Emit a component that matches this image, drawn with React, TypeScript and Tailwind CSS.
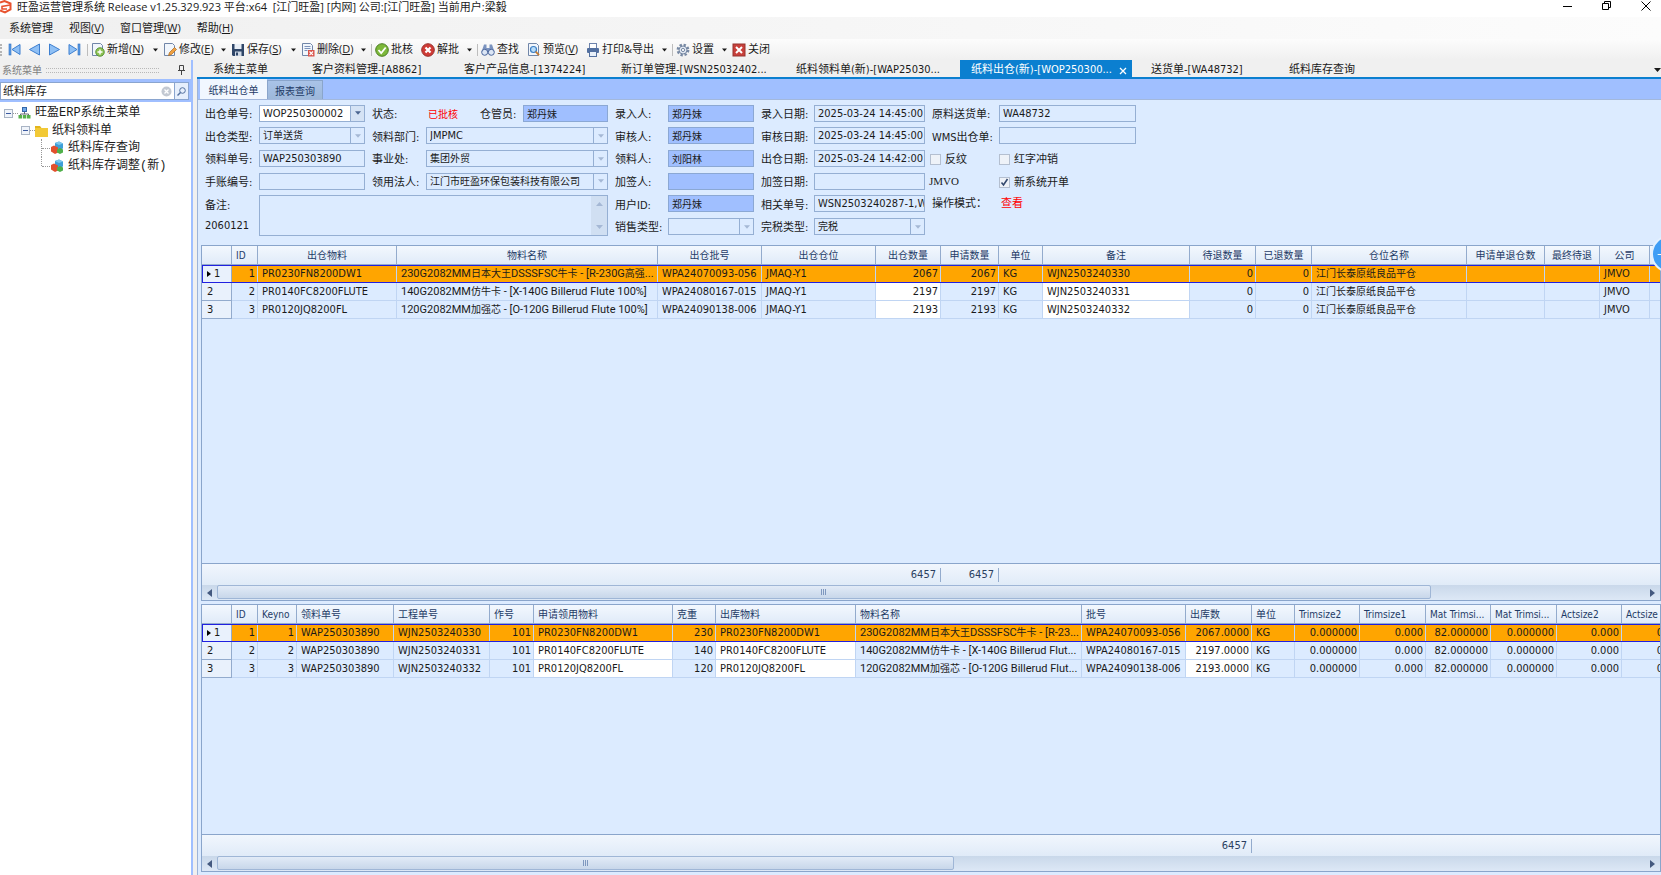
import React from "react";

type Align = "left" | "right" | "center";

interface IColumn {
  title: string;
  width: number;
  align?: Align;
  editable?: boolean;
  long?: boolean;
  total?: string;
}

const stockColumns: IColumn[] = [
  { title: "ID", width: 26, align: "right" },
  { title: "出仓物料", width: 139 },
  { title: "物料名称", width: 261, long: true },
  { title: "出仓批号", width: 104 },
  { title: "出仓仓位", width: 114 },
  { title: "出仓数量", width: 65, align: "right", editable: true, total: "6457" },
  { title: "申请数量", width: 58, align: "right", total: "6457" },
  { title: "单位", width: 44 },
  { title: "备注", width: 147, editable: true },
  { title: "待退数量", width: 66, align: "right" },
  { title: "已退数量", width: 56, align: "right" },
  { title: "仓位名称", width: 155 },
  { title: "申请单退仓数", width: 78 },
  { title: "最终待退", width: 55 },
  { title: "公司", width: 50 },
  { title: "", width: 60 },
];

const stockRows = [
  ["1", "PR0230FN8200DW1", "230G2082MM日本大王DSSSFSC牛卡 - [R-230G高强...", "WPA24070093-056", "JMAQ-Y1", "2067", "2067", "KG", "WJN2503240330", "0", "0", "江门长泰原纸良品平仓", "", "", "JMVO", ""],
  ["2", "PR0140FC8200FLUTE", "140G2082MM仿牛卡 - [X-140G Billerud Flute 100%]", "WPA24080167-015", "JMAQ-Y1", "2197", "2197", "KG", "WJN2503240331", "0", "0", "江门长泰原纸良品平仓", "", "", "JMVO", ""],
  ["3", "PR0120JQ8200FL", "120G2082MM加强芯 - [O-120G Billerud Flute 100%]", "WPA24090138-006", "JMAQ-Y1", "2193", "2193", "KG", "WJN2503240332", "0", "0", "江门长泰原纸良品平仓", "", "", "JMVO", ""],
];

const detailColumns: IColumn[] = [
  { title: "ID", width: 26, align: "right" },
  { title: "Keyno", width: 39, align: "right" },
  { title: "领料单号", width: 97 },
  { title: "工程单号", width: 96 },
  { title: "作号", width: 44, align: "right" },
  { title: "申请领用物料", width: 139, editable: true },
  { title: "克重", width: 43, align: "right" },
  { title: "出库物料", width: 140, editable: true },
  { title: "物料名称", width: 226, long: true },
  { title: "批号", width: 104 },
  { title: "出库数", width: 66, align: "right", editable: true, total: "6457" },
  { title: "单位", width: 43 },
  { title: "Trimsize2", width: 65, align: "right" },
  { title: "Trimsize1", width: 66, align: "right" },
  { title: "Mat Trimsi...", width: 65, align: "right" },
  { title: "Mat Trimsi...", width: 66, align: "right" },
  { title: "Actsize2", width: 65, align: "right" },
  { title: "Actsize", width: 66, align: "right" },
];

const detailRows = [
  ["1", "1", "WAP250303890", "WJN2503240330", "101", "PR0230FN8200DW1", "230", "PR0230FN8200DW1", "230G2082MM日本大王DSSSFSC牛卡 - [R-23...", "WPA24070093-056", "2067.0000", "KG", "0.000000", "0.000", "82.000000", "0.000000", "0.000", "0.000"],
  ["2", "2", "WAP250303890", "WJN2503240331", "101", "PR0140FC8200FLUTE", "140", "PR0140FC8200FLUTE", "140G2082MM仿牛卡 - [X-140G Billerud Flut...", "WPA24080167-015", "2197.0000", "KG", "0.000000", "0.000", "82.000000", "0.000000", "0.000", "0.000"],
  ["3", "3", "WAP250303890", "WJN2503240332", "101", "PR0120JQ8200FL", "120", "PR0120JQ8200FL", "120G2082MM加强芯 - [O-120G Billerud Flut...", "WPA24090138-006", "2193.0000", "KG", "0.000000", "0.000", "82.000000", "0.000000", "0.000", "0.000"],
];

const alignClass: Record<Align, string> = {
  left: "text-left",
  right: "text-right",
  center: "text-center",
};

/* ---------- icons ---------- */

const Caret: React.FC<{ className?: string }> = ({ className = "" }) => (
  <svg width="7" height="4" viewBox="0 0 7 4" className={className} fill="currentColor">
    <path d="M0 0h7L3.5 4z" />
  </svg>
);

const NavIcon: React.FC<{ kind: "first" | "prev" | "next" | "last" }> = ({ kind }) => {
  const flip = kind === "next" || kind === "last";
  const bar = kind === "first" || kind === "last";
  return (
    <svg width="13" height="13" viewBox="0 0 13 13" className={flip ? "-scale-x-100" : ""}>
      {bar && <rect x="1" y="1" width="2" height="11" fill="#5b9ce6" stroke="#2f6fc0" strokeWidth=".6" />}
      <path d={bar ? "M12 1.5v10L4 6.5z" : "M11.5 1v11L1.5 6.5z"} fill="#8fc0f5" stroke="#3d7fd0" strokeWidth="1" />
    </svg>
  );
};

const PageShape = () => <path d="M1.5.5h8l2 2v10h-10z" fill="#f1f6fc" stroke="#7186a8" />;

const icons: Record<string, React.ReactNode> = {
  add: (
    <>
      <PageShape />
      <circle cx="9" cy="9" r="4.3" fill="#8cc152" stroke="#4c8a2a" strokeWidth=".8" />
      <path d="M9 6.5v5M6.5 9h5" stroke="#fff" strokeWidth="1.4" />
    </>
  ),
  edit: (
    <>
      <PageShape />
      <path d="M5.5 12.5l1-3 5-5 2 2-5 5z" fill="#f0a040" stroke="#a8681c" strokeWidth=".7" />
    </>
  ),
  save: (
    <>
      <path d="M1 1h12v12H2l-1-1z" fill="#2f4668" />
      <rect x="3.5" y="1" width="7" height="5" fill="#e8eef6" />
      <rect x="4" y="8.5" width="6.5" height="4.5" fill="#cfd9e6" />
      <rect x="5" y="9.5" width="2" height="3" fill="#2f4668" />
    </>
  ),
  remove: (
    <>
      <PageShape />
      <path d="M3.5 3.5h6M3.5 5.5h6M3.5 7.5h3" stroke="#7d93bb" />
      <rect x="7" y="7" width="6.5" height="6.5" fill="#d9534a" />
      <path d="M8.5 8.5l3.5 3.5M12 8.5L8.5 12" stroke="#fff" strokeWidth="1.1" />
    </>
  ),
  approve: (
    <>
      <circle cx="7" cy="7" r="6.3" fill="#7db83a" stroke="#4a7d22" />
      <path d="M3.5 7l2.7 3 4.5-5.5" fill="none" stroke="#fff" strokeWidth="1.8" />
    </>
  ),
  reject: (
    <>
      <circle cx="7" cy="7" r="6.3" fill="#cf3b36" stroke="#98302c" />
      <path d="M4.5 4.5l5 5M9.5 4.5l-5 5" stroke="#fff" strokeWidth="2.2" />
    </>
  ),
  find: (
    <>
      <path d="M3 1.5h2.5V5h3V1.5H11L13.5 9H.5z" fill="#7b93bf" />
      <circle cx="3.7" cy="9.3" r="3" fill="#dce6f5" stroke="#4a659b" />
      <circle cx="10.3" cy="9.3" r="3" fill="#dce6f5" stroke="#4a659b" />
    </>
  ),
  preview: (
    <>
      <PageShape />
      <circle cx="6.5" cy="6.5" r="3" fill="#b9dcf8" stroke="#3b7fc4" strokeWidth="1.2" />
      <path d="M8.7 8.7l3.3 3.5" stroke="#c47b32" strokeWidth="1.8" />
    </>
  ),
  print: (
    <>
      <rect x="3.5" y=".5" width="7" height="5" fill="#fff" stroke="#6d83ac" />
      <rect x="1" y="5" width="12" height="5" rx="1" fill="#526f9f" />
      <rect x="3.5" y="8.5" width="7" height="5" fill="#e8f0fa" stroke="#526f9f" />
    </>
  ),
  settings: (
    <>
      <circle cx="7" cy="7" r="5.2" fill="none" stroke="#7688a3" strokeWidth="2.4" strokeDasharray="2.3 1.783" />
      <circle cx="7" cy="7" r="4" fill="#dfe6f0" stroke="#7688a3" />
      <circle cx="7" cy="7" r="1.6" fill="#fff" stroke="#7688a3" />
    </>
  ),
  close: (
    <>
      <rect x="1" y="1" width="12" height="12" fill="#c8403b" stroke="#96322e" />
      <path d="M4 4l6 6M10 4l-6 6" stroke="#fff" strokeWidth="2" />
    </>
  ),
};

const ToolIcon: React.FC<{ name: string }> = ({ name }) => (
  <svg width="14" height="14" viewBox="0 0 14 14" className="shrink-0">
    {icons[name]}
  </svg>
);

const BlockIcon = () => (
  <svg width="14" height="14" viewBox="0 0 14 14" className="shrink-0">
    <path d="M5 2l4-1.5 4 2v5L9 9 5 7.5z" fill="#3f9fd8" />
    <path d="M5 2l4 2 4-1.5-4-2z" fill="#7cc8ee" />
    <path d="M1 6l3-1.5 4 2v5L5 13l-4-2.5z" fill="#e2502e" />
    <path d="M7 8.5L10 7l3 1.5v3L10 13l-3-1.5z" fill="#4fb04a" />
  </svg>
);

/* ---------- top bars ---------- */

const TitleBar = () => (
  <header className="flex h-[17px] items-start bg-white text-[11px] leading-[14px]">
    <svg width="13" height="14" viewBox="0 0 13 14" className="mr-1 shrink-0" fill="none" stroke="#e8532f" strokeWidth="2">
      <path d="M0 2.5L4.5 1 10.5 3.5v6L5 12.5 0 10.5" />
      <path d="M10 5L2 6.5v2.5h5" strokeWidth="1.6" />
    </svg>
    <h1 className="whitespace-pre">旺盈运营管理系统 Release v1.25.329.923 平台:x64  [江门旺盈] [内网] 公司:[江门旺盈] 当前用户:梁毅</h1>
    <div className="mr-[10px] ml-auto flex h-full items-start gap-[30px] text-black">
      <button aria-label="最小化">
        <svg width="9" height="11" viewBox="0 0 9 11" stroke="currentColor"><path d="M0 6.5h9" /></svg>
      </button>
      <button aria-label="还原">
        <svg width="9" height="11" viewBox="0 0 9 11" fill="none" stroke="currentColor"><path d="M.5 3.5h6v6h-6zM2.5 3V1.5h6v6H7" /></svg>
      </button>
      <button aria-label="关闭窗口">
        <svg width="10" height="11" viewBox="0 0 10 11" stroke="currentColor"><path d="M.5 1.5l9 9M9.5 1.5l-9 9" /></svg>
      </button>
    </div>
  </header>
);

const MenuBar = () => (
  <nav className="flex h-[22px] items-center gap-4 bg-linear-to-r from-[#f0f0f0] to-[#fcfcfc] pl-[9px] text-[11px]">
    <button>系统管理</button>
    <button>视图(<u>V</u>)</button>
    <button>窗口管理(<u>W</u>)</button>
    <button>帮助(<u>H</u>)</button>
  </nav>
);

const tools = [
  { icon: "add", text: "新增", hotkey: "N", caret: true, size: "w-[72px]" },
  { icon: "edit", text: "修改", hotkey: "E", caret: true, size: "w-[68px]" },
  { icon: "save", text: "保存", hotkey: "S", caret: true, size: "w-[70px]" },
  { icon: "remove", text: "删除", hotkey: "D", caret: true, size: "w-[74px]", divider: true },
  { icon: "approve", text: "批核", size: "w-[46px]" },
  { icon: "reject", text: "解批", caret: true, size: "w-[60px]", divider: true },
  { icon: "find", text: "查找", size: "w-[46px]" },
  { icon: "preview", text: "预览", hotkey: "V", size: "w-[59px]" },
  { icon: "print", text: "打印&导出", caret: true, size: "w-[90px]", divider: true },
  { icon: "settings", text: "设置", caret: true, size: "w-[56px]" },
  { icon: "close", text: "关闭", size: "w-[46px]" },
];

const ToolBar = () => (
  <div className="flex h-[21px] items-center bg-linear-to-b from-[#fcfcfc] to-[#f0f0f0] text-[11px]">
    <div className="mr-[6px] h-3 border-l-2 border-dotted border-[#b5b5b5]" />
    <div className="flex gap-[7px]">
      <button aria-label="首条"><NavIcon kind="first" /></button>
      <button aria-label="上一条"><NavIcon kind="prev" /></button>
      <button aria-label="下一条"><NavIcon kind="next" /></button>
      <button aria-label="末条"><NavIcon kind="last" /></button>
    </div>
    <div className="mr-[3px] ml-[6px] h-3 w-px bg-[#bdbdbd]" />
    {tools.map((tool) => (
      <div key={tool.icon} className={`flex items-center whitespace-nowrap ${tool.size}`}>
        <button className="flex items-center gap-[2px]">
          <ToolIcon name={tool.icon} />
          <span>
            {tool.text}
            {tool.hotkey && <>(<u>{tool.hotkey}</u>)</>}
          </span>
        </button>
        {tool.caret && (
          <button aria-label={`${tool.text}选项`} className="mr-[5px] ml-auto">
            <Caret className="w-[5px]" />
          </button>
        )}
        {tool.divider && <div className="mr-[3px] h-3 w-px bg-[#bdbdbd]" />}
      </div>
    ))}
  </div>
);

/* ---------- left panel ---------- */

const Toggle = () => (
  <button aria-label="折叠" className="flex size-[9px] shrink-0 items-center justify-center border border-[#a9b4c4] bg-[#f0f4fa]">
    <span className="h-px w-[5px] bg-[#3b5aa0]" />
  </button>
);

const SidePanel = () => (
  <aside className="flex w-[193px] shrink-0 flex-col border-r-2 border-[#a0bfff]">
    <div className="flex h-[19px] shrink-0 items-center bg-[#f0f0f0] pt-px pr-[6px] pl-[2px] text-[10px] text-[#7f7f7f]">
      <span>系统菜单</span>
      <div className="ml-1 h-[5px] w-[113px] border-y border-dotted border-[#b8b8b8]" />
      <svg width="7" height="10" viewBox="0 0 7 10" className="ml-auto" fill="none" stroke="#444">
        <path d="M1.5.5h4v5h-4zM0 5.5h7M3.5 6v4" />
      </svg>
    </div>
    <div className="h-[23px] shrink-0 bg-[#a0bfff] pt-[3px] pr-[2px]">
      <div className="flex h-[18px] border border-[#8aa5cf] bg-white">
        <input
          aria-label="搜索菜单"
          defaultValue="纸料库存"
          className="min-w-0 flex-1 pt-[2px] pl-[2px] text-[11px] outline-none"
        />
        <button aria-label="清除" className="mr-[2px]">
          <svg width="11" height="11" viewBox="0 0 11 11">
            <circle cx="5.5" cy="5.5" r="5" fill="#c3c9d2" />
            <path d="M3.5 3.5l4 4M7.5 3.5l-4 4" stroke="#fff" strokeWidth="1.3" />
          </svg>
        </button>
        <button aria-label="搜索" className="flex w-[14px] items-center justify-center border-l border-[#8aa5cf] bg-[#e6effc]">
          <svg width="9" height="9" viewBox="0 0 9 9" fill="none" stroke="#53719f">
            <circle cx="5.5" cy="3.5" r="2.8" />
            <path d="M3.5 5.5L.5 8.5" strokeWidth="1.4" />
          </svg>
        </button>
      </div>
    </div>
    <ul className="flex-1 bg-white pt-[2px] pl-1 font-['Liberation_Mono','Noto_Sans_CJK_SC',monospace] text-[12px]">
      <li className="flex h-[18px] items-center">
        <Toggle />
        <span className="w-[5px] border-t border-dotted border-[#999]" />
        <svg width="13" height="12" viewBox="0 0 13 12" className="mr-1">
          <rect x="4.5" y=".5" width="4" height="4" fill="#6fa8e8" stroke="#3467a8" />
          <path d="M6.5 5v2M2.5 8.5V7h8v1.5" fill="none" stroke="#667" />
          <rect x=".5" y="8" width="3.5" height="3.5" fill="#57b04b" />
          <rect x="4.8" y="8" width="3.5" height="3.5" fill="#57b04b" />
          <rect x="9" y="8" width="3.5" height="3.5" fill="#57b04b" />
        </svg>
        <a href="#root-menu">旺盈ERP系统主菜单</a>
      </li>
      <li className="flex h-[17px] items-center pl-[17px]">
        <Toggle />
        <span className="w-[5px] border-t border-dotted border-[#999]" />
        <svg width="13" height="12" viewBox="0 0 13 12" className="mr-1">
          <path d="M0 1h5l1.5 2H13v9H0z" fill="#e3b51c" />
          <path d="M0 3h13v9H0z" fill="#f2c936" />
        </svg>
        <a href="#picking">纸料领料单</a>
      </li>
      {["纸料库存查询", "纸料库存调整(新)"].map((name, i) => (
        <li key={name} className="flex h-[18px] items-center pl-[37px]">
          <span className={`w-px self-start border-l border-dotted border-[#999] ${i === 0 ? "h-[18px]" : "h-[9px]"}`} />
          <span className="w-2 border-t border-dotted border-[#999]" />
          <BlockIcon />
          <a href={`#stock-${i}`} className="ml-[4px]">{name}</a>
        </li>
      ))}
    </ul>
  </aside>
);

/* ---------- document tabs ---------- */

const documentTabs = [
  { text: "系统主菜单", size: "w-[99px]" },
  { text: "客户资料管理-[A8862]", size: "w-[152px]" },
  { text: "客户产品信息-[1374224]", size: "w-[157px]" },
  { text: "新订单管理-[WSN25032402...", size: "w-[175px]" },
  { text: "纸料领料单(新)-[WAP25030...", size: "w-[175px]" },
  { text: "纸料出仓(新)-[WOP250300...", size: "w-[172px]", active: true },
  { text: "送货单-[WA48732]", size: "w-[138px]" },
  { text: "纸料库存查询", size: "w-[130px]" },
];

const DocumentTabs = () => (
  <div className="flex h-[19px] shrink-0 items-stretch border-b-2 border-[#0b7fd0] bg-[#f0f0f0] pl-[5px] text-[11px]">
    {documentTabs.map((tab) => (
      <div
        key={tab.text}
        className={`flex items-center px-[11px] pt-[4px] whitespace-nowrap ${tab.size} ${tab.active ? "mr-2 bg-[#0b7fd0] pr-[5px] text-white" : ""}`}
      >
        <button>{tab.text}</button>
        {tab.active && (
          <button aria-label="关闭标签" className="ml-auto">
            <svg width="8" height="8" viewBox="0 0 8 8" stroke="currentColor" strokeWidth="1.3"><path d="M1 1l6 6M7 1L1 7" /></svg>
          </button>
        )}
      </div>
    ))}
    <button aria-label="更多标签" className="ml-auto pt-[3px]">
      <Caret />
    </button>
  </div>
);

/* ---------- form ---------- */

const boxClass = "h-[17px] w-full min-w-0 border border-[#95afd3] bg-[#dcebff] pl-[3px] text-[11px] leading-[15px] outline-none";

const Label: React.FC<{ htmlFor?: string; first?: boolean; children: React.ReactNode }> = ({ htmlFor, first, children }) => (
  <label htmlFor={htmlFor} className={`pt-[4px] whitespace-nowrap ${first ? "" : "pl-[7px]"}`}>
    {children}
  </label>
);

const TextBox: React.FC<{ id: string; value?: string; person?: boolean }> = ({ id, value = "", person }) => (
  <input
    id={id}
    readOnly
    value={value}
    className={person ? "h-[17px] w-full min-w-0 border border-[#8ba8d4] bg-[#a0bfff] px-[3px] text-[10px] leading-[15px] outline-none" : boxClass}
  />
);

const Dropdown: React.FC<{ id: string; value?: string; enabled?: boolean; small?: boolean }> = ({ id, value = "", enabled, small }) => (
  <div className={`flex h-[17px] w-full border border-[#95afd3] ${enabled ? "bg-white" : "bg-[#dcebff]"}`}>
    <select
      id={id}
      defaultValue={value}
      className={`min-w-0 flex-1 appearance-none pl-[3px] leading-[15px] outline-none ${small ? "text-[10px]" : "text-[11px]"}`}
    >
      <option>{value}</option>
    </select>
    <span className={`flex w-[14px] items-center justify-center border-l border-[#95afd3] ${enabled ? "bg-[#d5e3f5] text-[#4a6590]" : "text-[#a5b8d5]"}`}>
      <Caret className="w-[6px]" />
    </span>
  </div>
);

const CheckBox: React.FC<{ id: string; label: string; checked?: boolean }> = ({ id, label, checked }) => (
  <div className="flex items-center gap-1 pt-[2px] whitespace-nowrap">
    <span className="relative flex size-[11px]">
      <input
        id={id}
        type="checkbox"
        defaultChecked={checked}
        className="size-[11px] appearance-none border border-[#b4bfd0] bg-[#eef2f8]"
      />
      {checked && (
        <svg viewBox="0 0 11 11" className="pointer-events-none absolute inset-0" fill="none" stroke="#34496e" strokeWidth="1.6">
          <path d="M2.5 5.5l2 2.5 4-6" />
        </svg>
      )}
    </span>
    <label htmlFor={id} className="pt-[2px]">{label}</label>
  </div>
);

const OrderForm = () => (
  <form className="grid h-[136px] shrink-0 grid-cols-[54px_106px_61px_182px_60px_86px_60px_111px_74px_137px] grid-rows-6 items-center text-[11px]">
    <Label htmlFor="outNo" first>出仓单号:</Label>
    <Dropdown id="outNo" value="WOP250300002" enabled />
    <Label>状态:</Label>
    <div className="flex items-center">
      <span className="w-[54px] shrink-0 pt-[2px] pl-[2px] text-[10px] text-[#ff0000]">已批核</span>
      <label htmlFor="keeper" className="w-[43px] shrink-0 pt-[4px]">仓管员:</label>
      <TextBox id="keeper" value="郑丹妹" person />
    </div>
    <Label htmlFor="creator">录入人:</Label>
    <TextBox id="creator" value="郑丹妹" person />
    <Label htmlFor="createdAt">录入日期:</Label>
    <TextBox id="createdAt" value="2025-03-24 14:45:00" />
    <Label htmlFor="delivery">原料送货单:</Label>
    <TextBox id="delivery" value="WA48732" />

    <Label htmlFor="outType" first>出仓类型:</Label>
    <Dropdown id="outType" value="订单送货" small />
    <Label htmlFor="dept">领料部门:</Label>
    <Dropdown id="dept" value="JMPMC" />
    <Label htmlFor="auditor">审核人:</Label>
    <TextBox id="auditor" value="郑丹妹" person />
    <Label htmlFor="auditedAt">审核日期:</Label>
    <TextBox id="auditedAt" value="2025-03-24 14:45:00" />
    <Label htmlFor="wms">WMS出仓单:</Label>
    <TextBox id="wms" />

    <Label htmlFor="pickNo" first>领料单号:</Label>
    <TextBox id="pickNo" value="WAP250303890" />
    <Label htmlFor="division">事业处:</Label>
    <Dropdown id="division" value="集团外贸" small />
    <Label htmlFor="picker">领料人:</Label>
    <TextBox id="picker" value="刘阳林" person />
    <Label htmlFor="outAt">出仓日期:</Label>
    <TextBox id="outAt" value="2025-03-24 14:42:00" />
    <div className="pl-[5px]"><CheckBox id="reverse" label="反纹" /></div>
    <CheckBox id="offset" label="红字冲销" />

    <Label htmlFor="manualNo" first>手账编号:</Label>
    <TextBox id="manualNo" />
    <Label htmlFor="legal">领用法人:</Label>
    <Dropdown id="legal" value="江门市旺盈环保包装科技有限公司" small />
    <Label htmlFor="cosigner">加签人:</Label>
    <TextBox id="cosigner" person />
    <Label htmlFor="cosignedAt">加签日期:</Label>
    <TextBox id="cosignedAt" />
    <span className="pl-1 font-['Liberation_Serif',serif]">JMVO</span>
    <CheckBox id="newSystem" label="新系统开单" checked />

    <Label htmlFor="remark" first>备注:</Label>
    <div className="col-span-3 row-span-2 flex h-[41px] border border-[#95afd3]">
      <textarea id="remark" readOnly className="min-w-0 flex-1 resize-none overflow-hidden outline-none" />
      <div className="flex w-4 flex-col items-center justify-between bg-[#d0dff2] py-[6px] text-[#a5b8d5]">
        <Caret className="rotate-180" />
        <Caret />
      </div>
    </div>
    <Label htmlFor="userId">用户ID:</Label>
    <TextBox id="userId" value="郑丹妹" person />
    <Label htmlFor="related">相关单号:</Label>
    <TextBox id="related" value="WSN2503240287-1,WSN2503240287-2" />
    <span className="pl-[7px] whitespace-nowrap">操作模式：</span>
    <span className="pl-[2px] text-[#ff0000]">查看</span>

    <span>2060121</span>
    <Label htmlFor="saleType">销售类型:</Label>
    <Dropdown id="saleType" />
    <Label htmlFor="taxType">完税类型:</Label>
    <Dropdown id="taxType" value="完税" small />
  </form>
);

/* ---------- grids ---------- */

const Arrow: React.FC<{ back?: boolean }> = ({ back }) => (
  <svg width="5" height="8" viewBox="0 0 5 8" className={back ? "rotate-180" : ""} fill="#44597f">
    <path d="M0 0l5 4-5 4z" />
  </svg>
);

const ScrollBar: React.FC<{ percent: number }> = ({ percent }) => (
  <div className="flex h-[15px] shrink-0 items-center bg-linear-to-b from-[#c9d8ea] to-[#dde8f6]">
    <button aria-label="向左滚动" className="flex w-[15px] justify-center"><Arrow back /></button>
    <div className="h-full flex-1">
      <div
        className="flex h-[14px] items-center justify-center gap-[1px] rounded-xs border border-[#9fb6d6] bg-linear-to-b from-[#e2ebf7] to-[#c8d7ea]"
        style={{ width: `${percent}%` }}
      >
        <span className="h-[6px] w-px bg-[#7f98bf]" />
        <span className="h-[6px] w-px bg-[#7f98bf]" />
        <span className="h-[6px] w-px bg-[#7f98bf]" />
      </div>
    </div>
    <button aria-label="向右滚动" className="flex w-[15px] justify-center"><Arrow /></button>
  </div>
);

// Chinese runs are set one step smaller than the latin text around them
const CellText: React.FC<{ text: string }> = ({ text }) => (
  <>
    {text.split(/([\u4e00-\u9fff]+)/).map((part, i) =>
      i % 2 === 1 ? <span key={i} className="text-[10px]">{part}</span> : part
    )}
  </>
);

const DataGrid: React.FC<{
  columns: IColumn[];
  rows: string[][];
  percent: number;
  centered?: boolean;
  className: string;
}> = ({ columns, rows, percent, centered, className }) => {
  const total = columns.reduce((sum, col) => sum + col.width, 30);
  return (
    <section className={`flex min-h-0 flex-col overflow-hidden border border-[#8aa5cb] ${className}`}>
      <div className="min-h-0 flex-1 overflow-hidden">
        <table className="table-fixed border-separate border-spacing-0 text-[11px] leading-[17px]" style={{ width: total }}>
          <colgroup>
            <col style={{ width: 30 }} />
            {columns.map((col, i) => (
              <col key={i} style={{ width: col.width }} />
            ))}
          </colgroup>
          <thead>
            <tr className="h-[19px] bg-linear-to-b from-[#f3f8fe] to-[#dfeaf8] text-[10px] text-[#1e3b66]">
              <th className="border-r border-b border-[#93abcd]" />
              {columns.map((col, i) => (
                <th
                  key={i}
                  className={`overflow-hidden border-r border-b border-[#93abcd] font-normal whitespace-nowrap ${centered && i > 0 ? "px-[2px] text-center" : "pr-[2px] pl-1 text-left"}`}
                >
                  {col.title}
                </th>
              ))}
            </tr>
          </thead>
          <tbody>
            {rows.map((row, r) => (
              <tr
                key={r}
                className={`h-[18px] ${r === 0 ? "bg-[#ffa500] outline-1 -outline-offset-1 outline-[#2020e0]" : ""}`}
              >
                <td className="border-r border-b border-[#93abcd] bg-[#e9f1fc] p-0">
                  <span className="flex items-center gap-[3px] pl-[5px]">
                    {r === 0 && <svg width="4" height="6" viewBox="0 0 4 6"><path d="M0 0l4 3-4 3z" /></svg>}
                    {r + 1}
                  </span>
                </td>
                {row.map((cell, c) => (
                  <td
                    key={c}
                    className={`overflow-hidden border-r border-b border-[#c0d5f3] py-0 pl-1 whitespace-nowrap ${columns[c].long ? "pr-0 font-['Roboto','Noto_Sans_CJK_SC',sans-serif]" : "pr-[2px]"} ${alignClass[columns[c].align ?? "left"]} ${r > 0 && columns[c].editable ? "bg-white" : ""}`}
                  >
                    <CellText text={cell} />
                  </td>
                ))}
              </tr>
            ))}
          </tbody>
        </table>
      </div>
      <div className="flex h-[22px] shrink-0 items-center overflow-hidden border-t border-[#8aa5cb] bg-linear-to-b from-[#f1f6fd] to-[#e0ebf8] pl-[30px] text-[11px] text-[#2b3f60]">
        {columns.map((col, i) => (
          <div
            key={i}
            className={`h-[14px] shrink-0 pr-[4px] text-right leading-[14px] ${col.total ? "border-r border-[#93abcd]" : ""}`}
            style={{ width: col.width }}
          >
            {col.total}
          </div>
        ))}
      </div>
      <ScrollBar percent={percent} />
    </section>
  );
};

export default function App() {
  return (
    <div className="relative flex h-screen flex-col overflow-hidden bg-[#f0f0f0] font-['DejaVu_Sans_Condensed','Noto_Sans_CJK_SC',sans-serif] text-[#1a1a1a]">
      <div className="font-['Open_Sans','Noto_Sans_CJK_SC',sans-serif]">
        <TitleBar />
        <MenuBar />
        <ToolBar />
      </div>
      <div className="flex min-h-0 flex-1">
        <SidePanel />
        <main className="ml-1 flex min-w-0 flex-1 flex-col">
          <DocumentTabs />
          <div className="flex min-h-0 flex-1 flex-col border-l border-[#9db4d8] bg-[#dcebff]">
            <div className="flex h-[21px] shrink-0 items-end border-b border-[#a3b8dc] bg-[#a0bfff] pl-[2px] text-[10px] text-[#1e3b66]">
              <button className="h-[20px] w-[67px] bg-[#f1f7ff] pt-[3px]">纸料出仓单</button>
              <button className="h-[19px] w-[56px] border border-b-0 border-[#8aa5cb] bg-linear-to-b from-[#a9c3e8] to-[#9db8da] pt-[2px]">报表查询</button>
            </div>
            <div className="flex min-h-0 flex-1 flex-col pt-[2px] pb-[3px] pl-[3px]">
              <div className="shrink-0 pb-[7px] pl-[4px]">
                <OrderForm />
              </div>
              <DataGrid columns={stockColumns} rows={stockRows} percent={85} centered className="mb-[3px] flex-4" />
              <DataGrid columns={detailColumns} rows={detailRows} percent={51.6} className="flex-3" />
            </div>
          </div>
        </main>
      </div>
      <button
        aria-label="悬浮球"
        className="absolute top-[235px] -right-[28px] size-[38px] rounded-full border-2 border-[#e4f1ff] bg-[#3f9df5] pl-1 text-left text-[12px] text-white"
      >
        –
      </button>
    </div>
  );
}
